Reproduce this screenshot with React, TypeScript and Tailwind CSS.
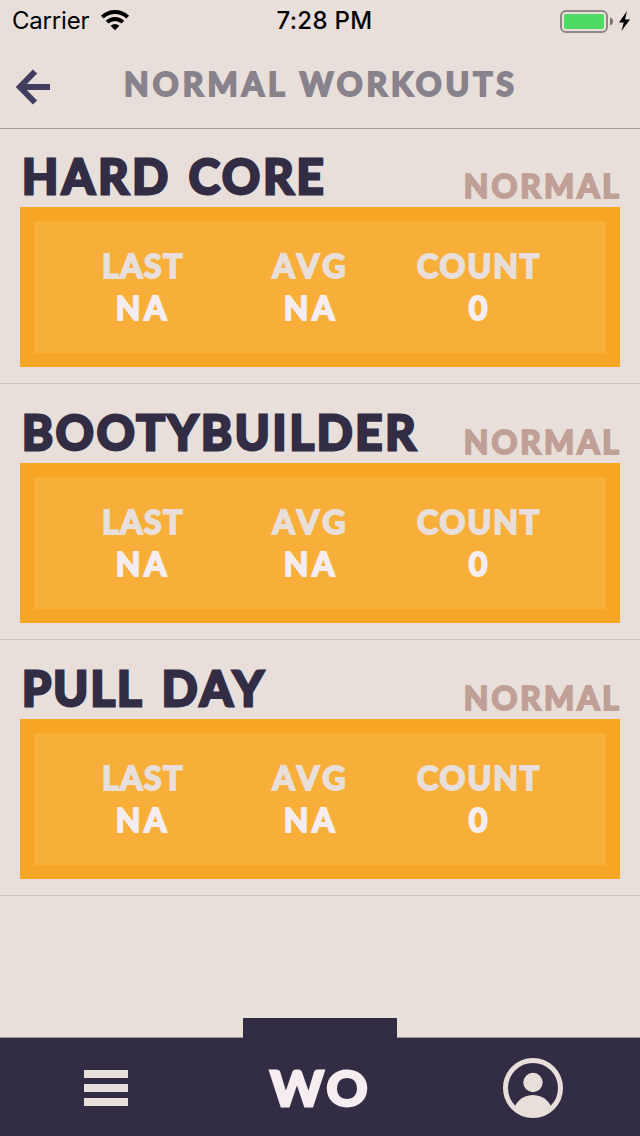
const workouts = [
  {
    words: [
      { text: "HARD", cls: "tracking-[3.7px]" },
      { text: "CORE", cls: "ml-[17px] tracking-[3.1px]" },
    ],
  },
  { words: [{ text: "BOOTYBUILDER", cls: "tracking-[2.9px]" }] },
  {
    words: [
      { text: "PULL", cls: "tracking-[2.2px]" },
      { text: "DAY", cls: "ml-[18px] tracking-[3.8px]" },
    ],
  },
];

const stats = [
  { label: "LAST", value: "NA", labelCls: "tracking-[1.6px]", valueCls: "tracking-[3.8px]" },
  { label: "AVG", value: "NA", labelCls: "tracking-[3.9px]", valueCls: "tracking-[3.8px]" },
  { label: "COUNT", value: "0", labelCls: "tracking-[2px]", valueCls: "tracking-[2px]" },
];

const small = "font-['Lato',sans-serif] text-[32px] font-bold leading-[42px] [-webkit-text-stroke:2px_currentColor]";
const large = "font-['Lato',sans-serif] text-[47px] font-bold leading-[50px] [-webkit-text-stroke:3px_currentColor]";

function StatusBar() {
  return (
    <div className="grid h-10 grid-cols-3 items-center font-['Inter',sans-serif] text-[24px] leading-[40px] text-black">
      <div className="flex items-center pl-3">
        <span className="pt-px tracking-[-0.2px]">Carrier</span>
        <svg className="mb-px ml-[11px]" width="30" height="24" viewBox="0 0 30 24" fill="none" stroke="#000" strokeWidth="4">
          <path d="M2.3 9.2A18 18 0 0 1 27.7 9.2" />
          <path d="M7.1 14.2A11.2 11.2 0 0 1 22.9 14.2" />
          <path d="M15 22.2L10.6 17.8A6.2 6.2 0 0 1 19.4 17.8Z" fill="#000" stroke="none" />
        </svg>
      </div>
      <div className="pl-[9px] pt-px text-center font-medium tracking-[0.3px]">7:28 PM</div>
      <div className="flex justify-end pr-[9px]">
        <svg width="72" height="24" viewBox="0 0 72 24">
          <rect x="2" y="2" width="46" height="21" rx="5" fill="none" stroke="#8f8885" strokeWidth="2" />
          <rect x="5" y="5" width="40" height="15" rx="2" fill="#4cd964" />
          <path d="M51 8.5c4 1.2 4 6.8 0 8z" fill="#746e6b" />
          <path d="M68 2L60 13.5h4.7L62.5 22L71 10.5h-5z" fill="#000" />
        </svg>
      </div>
    </div>
  );
}

function Header() {
  return (
    <div className="-mb-px flex h-[89px] border-b border-[#a09994]">
      <svg className="ml-4 mt-[29px]" width="35" height="36" viewBox="0 0 35 36" fill="none" stroke="#433e60" strokeWidth="6">
        <path d="M34 18H5M19 2.5L3.9 18L19 33.5" />
      </svg>
      <h1 className={`${small} ml-[73px] mt-[23px] flex whitespace-nowrap text-[#88828c]`}>
        <span className="tracking-[4.1px]">NORMAL</span>
        <span className="ml-[11px] tracking-[3.9px]">WORKOUTS</span>
      </h1>
    </div>
  );
}

export default function App() {
  return (
    <div className="flex h-[1136px] w-[640px] flex-col overflow-hidden bg-[#e8dfda]">
      <StatusBar />
      <Header />
      <main className="flex-1">
        {workouts.map((workout) => (
          <section key={workout.words[0].text} className="h-64 border-b border-[#c8c2bf] px-5 pb-4">
            <div className="flex h-[79px] justify-between whitespace-nowrap">
              <h2 className={`${large} ml-[2px] mt-[23px] flex text-[#322d45]`}>
                {workout.words.map((word) => (
                  <span key={word.text} className={word.cls}>{word.text}</span>
                ))}
              </h2>
              <span className={`${small} mr-[-2px] mt-[37px] tracking-[3px] text-[#c09f97]`}>NORMAL</span>
            </div>
            <div className="flex h-40 justify-center border-[14px] border-[#f7a524] bg-[#f8af39] pr-[18px] pt-6">
              {stats.map((stat) => (
                <div key={stat.label} className={`${small} w-[168px] text-center`}>
                  <div className={`${stat.labelCls} text-[#e8dfda]`}>{stat.label}</div>
                  <div className={`${stat.valueCls} text-[#f5edef]`}>{stat.value}</div>
                </div>
              ))}
            </div>
          </section>
        ))}
      </main>
      <nav className="relative grid h-[99px] grid-cols-3 items-center border-t border-[#a09994] bg-[#322d45]">
        <div className="absolute left-[243px] top-[-20px] h-5 w-[154px] bg-[#322d45]" />
        <div className="ml-[84px] mt-0.5 flex w-11 flex-col gap-1.5">
          <div className="h-2 bg-[#e8dfda]" />
          <div className="h-2 bg-[#e8dfda]" />
          <div className="h-2 bg-[#e8dfda]" />
        </div>
        <div className={`${large} mt-0.5 scale-x-[1.08] pl-0.5 text-center tracking-[3.5px] text-[#f5edef]`}>WO</div>
        <svg className="ml-[76px] mt-0.5" width="60" height="60" viewBox="0 0 60 60">
          <clipPath id="avatar">
            <circle cx="30" cy="30" r="29" />
          </clipPath>
          <circle cx="30" cy="30" r="27.5" fill="none" stroke="#e8dfda" strokeWidth="5" />
          <circle cx="30" cy="24.5" r="9.7" fill="#e8dfda" />
          <circle cx="30" cy="57.3" r="20.3" fill="#e8dfda" clipPath="url(#avatar)" />
        </svg>
      </nav>
    </div>
  );
}
